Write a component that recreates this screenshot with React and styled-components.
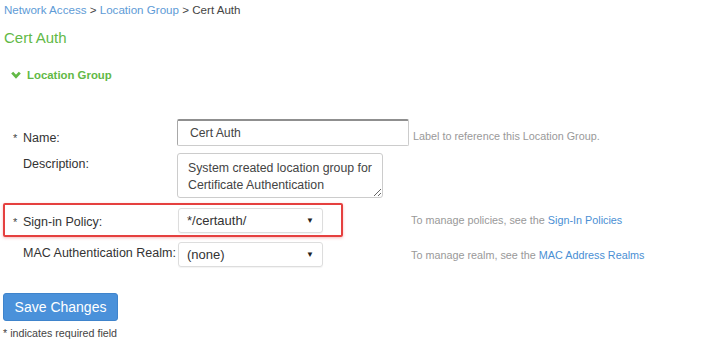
import React from 'react'
import styled, { createGlobalStyle } from 'styled-components'

const Global = createGlobalStyle`
  body {
    margin: 0;
    background: #fff;
    font-family: "Liberation Sans", Arial, sans-serif;
    color: #333;
  }
`

function Row({ label, required, highlight, shift, children, help }) {
  return (
    <RowWrap>
      <Main $highlight={highlight}>
        <Label $shift={shift}>
          <Star>{required ? '*' : ''}</Star>
          {label}
        </Label>
        {children}
      </Main>
      {help && <Help $shift={shift}>{help}</Help>}
    </RowWrap>
  )
}

function Select({ value }) {
  return (
    <SelectBox>
      <span>{value}</span>
      <Arrow>▼</Arrow>
    </SelectBox>
  )
}

export default function App() {
  return (
    <Page>
      <Global />
      <Crumbs>
        <CrumbLink>Network Access</CrumbLink> &gt; <CrumbLink>Location Group</CrumbLink> &gt; Cert Auth
      </Crumbs>
      <Title>Cert Auth</Title>
      <Section>
        <svg width="10" height="8" viewBox="0 0 10 8">
          <path d="M1.2 1.6 L5 5.6 L8.8 1.6" fill="none" stroke="#62b946" strokeWidth="2.8" />
        </svg>
        Location Group
      </Section>

      <Form>
        <Row label="Name:" required shift help={<>Label to reference this Location Group.</>}>
          <TextInput readOnly value="Cert Auth" />
        </Row>
        <Row label="Description:">
          <TextArea readOnly value={'System created location group for\nCertificate Authentication'} />
        </Row>
        <Row
          label="Sign-in Policy:"
          required
          highlight
          help={<>To manage policies, see the <Link>Sign-In Policies</Link></>}
        >
          <Select value="*/certauth/" />
        </Row>
        <Row
          label="MAC Authentication Realm:"
          help={<>To manage realm, see the <Link>MAC Address Realms</Link></>}
        >
          <Select value="(none)" />
        </Row>
      </Form>

      <SaveButton>Save Changes</SaveButton>
      <Note>* indicates required field</Note>
    </Page>
  )
}

const Page = styled.div`
  padding: 2px 0 0 3px;
  width: 720px;
  height: 344px;
  box-sizing: border-box;
  overflow: hidden;
`

const Crumbs = styled.div`
  font-size: 11.6px;
  line-height: 16px;
  color: #444;
  padding-left: 1px;
`

const CrumbLink = styled.span`
  color: #5e9bd6;
`

const Title = styled.div`
  margin-top: 10px;
  font-size: 15px;
  line-height: 20px;
  color: #62b946;
  padding-left: 1px;
`

const Section = styled.div`
  margin-top: 19px;
  display: flex;
  align-items: center;
  gap: 6px;
  padding-left: 8px;
  font-size: 11.4px;
  font-weight: bold;
  line-height: 16px;
  color: #62b946;
`

const Form = styled.div`
  margin-top: 34px;
  display: flex;
  flex-direction: column;
  gap: 3px;
`

const RowWrap = styled.div`
  display: flex;
  align-items: center;
`

const Main = styled.div`
  display: flex;
  align-items: ${p => (p.$highlight ? 'center' : 'flex-start')};
  width: 408px;
  box-sizing: border-box;
  border: 2px solid transparent;
  ${p =>
    p.$highlight &&
    `
    width: 340px;
    margin-right: 68px;
    border-color: #e5403f;
    border-radius: 2px;
    padding: 3px 0 2px;
    box-shadow: 0 1px 3px rgba(229, 64, 63, 0.35);
  `}
`

const Label = styled.div`
  width: 173px;
  flex: none;
  display: flex;
  align-items: center;
  align-self: ${p => (p.$shift ? 'center' : 'auto')};
  padding-top: ${p => (p.$shift ? '10px' : '3px')};
  font-size: 12.5px;
  line-height: 16px;
  color: #333;
  white-space: nowrap;
`

const Star = styled.span`
  width: 18px;
  padding-left: 8px;
  box-sizing: border-box;
  font-size: 11px;
  color: #444;
`

const TextInput = styled.input`
  width: 233px;
  height: 27px;
  margin-left: -1px;
  box-sizing: border-box;
  border: 1px solid #ccc;
  border-top: 2px solid #8f8f8f;
  border-left: 1px solid #a8a8a8;
  border-radius: 2px;
  padding: 0 11px 0 12px;
  font-family: inherit;
  font-size: 12.2px;
  color: #444;
  outline: none;
`

const TextArea = styled.textarea`
  width: 206px;
  height: 45px;
  margin-left: -1px;
  box-sizing: border-box;
  border: 1px solid #ccc;
  border-radius: 3px;
  padding: 6px 2px 0 10px;
  font-family: inherit;
  font-size: 12.3px;
  line-height: 17px;
  color: #444;
  outline: none;
  resize: both;
  overflow: hidden;
  white-space: pre;
`

const SelectBox = styled.div`
  width: 145px;
  height: 25px;
  box-sizing: border-box;
  border: 1px solid #ddd;
  border-radius: 3px;
  display: flex;
  align-items: center;
  justify-content: space-between;
  padding: 0 8px 0 8px;
  font-size: 13px;
  color: #333;
  box-shadow: 0 1px 1px rgba(0, 0, 0, 0.05);
`

const Arrow = styled.span`
  font-size: 8px;
  color: #222;
`

const Help = styled.div`
  margin-left: ${p => (p.$shift ? '2px' : '0')};
  padding-top: ${p => (p.$shift ? '7px' : '0')};
  font-size: 10.8px;
  line-height: 14px;
  color: #999;
  white-space: nowrap;
`

const Link = styled.span`
  color: #4a8fd4;
`

const SaveButton = styled.button`
  display: block;
  margin-top: 24px;
  width: 115px;
  height: 28px;
  border: 1px solid #3f84cc;
  border-radius: 3px;
  background: #4a91da;
  color: #fff;
  font-family: inherit;
  font-size: 14px;
  padding: 0;
`

const Note = styled.div`
  margin-top: 6px;
  font-size: 10.7px;
  line-height: 12px;
  color: #444;
`
